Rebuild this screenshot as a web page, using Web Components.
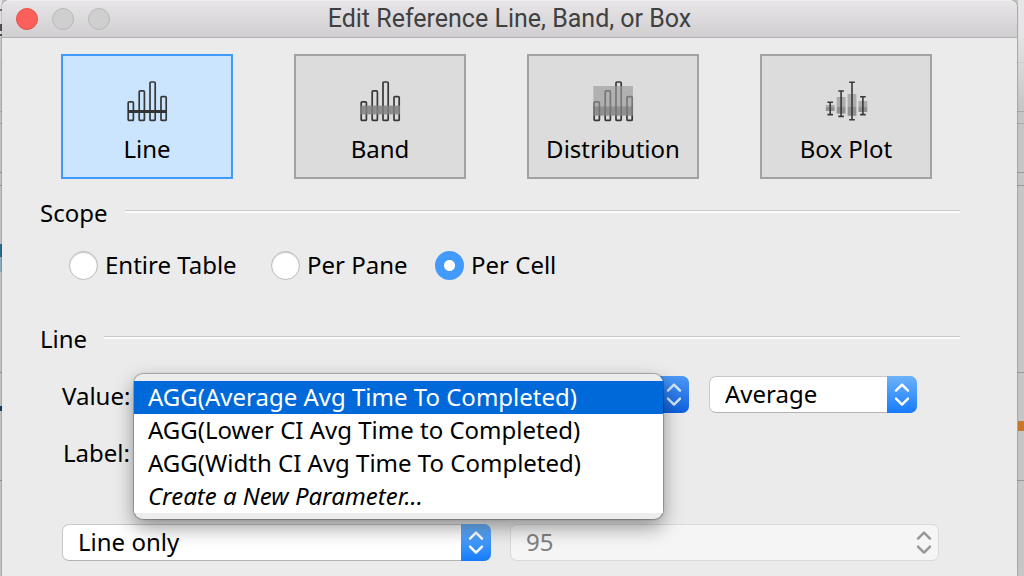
<!DOCTYPE html>
<html lang="en">
<head>
<meta charset="utf-8">
<title>Edit Reference Line, Band, or Box</title>
<style>
  html { background: #c6c6c6; }
  body {
    margin: 0;
    padding: 0 7px 0 2px;
    box-sizing: border-box;
    min-height: 100vh;
    display: flex;
    font: 24px/32px "Noto Sans", "Open Sans", sans-serif;
    color: #000;
    /* slivers of the worksheet behind the dialog */
    background:
      linear-gradient(#0000 244px, #2d6f92 244px 257px, #8fb0bf 257px 272px, #0000 272px) 0 0 / 2px 100% no-repeat,
      linear-gradient(#0000 406px, #1d3f66 406px 411px, #0000 411px) 0 0 / 2px 100% no-repeat,
      linear-gradient(#e4e4e4 0 9px, #777 9px 11px, #e4e4e4 11px 24px, #555 24px 31px, #e4e4e4 31px 34px, #555 34px 36px, #ccc 36px, #0000 100px) 0 0 / 2px 100% no-repeat,
      linear-gradient(#0000 421px, #c87828 421px 431px, #0000 431px) 100% 0 / 6px 100% no-repeat,
      linear-gradient(#e6e6e6 0 30px, #0000 110px) 100% 0 / 6px 100% no-repeat,
      linear-gradient(#0000 62px, #aaa 62px 63px, #0000 63px 111px, #aaa 111px 112px, #0000 112px 123px, #aaa 123px 124px, #0000 124px 172px, #999 172px 173px, #0000 173px 185px, #999 185px 186px, #0000 186px 372px, #999 372px 373px, #0000 373px 480px, #999 480px 481px, #0000 481px),
      #c6c6c6;
  }
  ref-dialog { flex: 1; min-width: 0; }
</style>
</head>
<body>
<ref-dialog heading="Edit Reference Line, Band, or Box">
  <type-picker></type-picker>
  <field-group heading="Scope"><scope-radios></scope-radios></field-group>
  <field-group heading="Line"><line-settings></line-settings></field-group>
</ref-dialog>

<script>
const define = (name, render) => customElements.define(name, class extends HTMLElement {
  connectedCallback() {
    if (this.shadowRoot) return;
    this.attachShadow({ mode: "open" }).innerHTML = render(this);
  }
});

define("ref-dialog", el => `
  <style>
    :host { display: flex; flex-direction: column; background: #ebebeb; border-radius: 8px 8px 0 0; box-shadow: 0 0 2px #0008; }
    header { display: grid; grid-template-columns: 120px 1fr 120px; align-items: center; height: 37px;
      background: linear-gradient(#e8e6e8, #d0ced0); border-bottom: 1px solid #b1b1b1; border-radius: 8px 8px 0 0; box-shadow: inset 0 1px #f0eff0; }
    .lights { display: flex; gap: 14px; padding-left: 14px; }
    .lights button { width: 22px; height: 22px; padding: 0; border: 1px solid #b9b9b9; border-radius: 50%; background: #d0cfd0; }
    .lights .close { background: #fc605b; border-color: #e2504b; }
    h1 { margin: 0; font: 25px/32px Roboto, sans-serif; color: #404040; text-align: center; white-space: nowrap; }
    main { padding: 16px 57px 15px 38px; }
  </style>
  <header>
    <div class="lights">
      <button class="close" aria-label="Close"></button>
      <button aria-label="Minimize" disabled></button>
      <button aria-label="Zoom" disabled></button>
    </div>
    <h1>${el.getAttribute("heading")}</h1>
  </header>
  <main><slot></slot></main>`);

const bars = `<g fill="none" stroke="#383838" stroke-width="1.7">
  <rect x="1.2" y="20.8" width="5.2" height="18.6" rx="1"/><rect x="12.2" y="9.9" width="5.2" height="29.5" rx="1"/>
  <rect x="23" y="1" width="5.2" height="38.4" rx="1"/><rect x="34" y="15.6" width="5.2" height="23.8" rx="1"/></g>`;
const box = (x, top, bottom, boxTop, mid, boxBottom) => `
  <rect x="${x - 4.4}" y="${boxTop}" width="8.8" height="${mid - boxTop}" fill="#acacac"/>
  <rect x="${x - 4.4}" y="${mid}" width="8.8" height="${boxBottom - mid}" fill="#919191"/>
  <path d="M${x - 2.8} ${top}h5.6M${x} ${top}V${bottom}M${x - 2.8} ${bottom}h5.6" stroke="#383838" stroke-width="1.6"/>`;
const icons = {
  line: bars + `<path d="M1 30.6h39" stroke="#333" stroke-width="3"/>`,
  band: bars + `<rect x=".3" y="24.6" width="39.7" height="8.8" fill="#808080" opacity=".85"/>`,
  distribution: bars + `<rect x=".3" y="5" width="39.7" height="29.6" fill="#9a9a9a" opacity=".65"/>
    <rect x=".3" y="25.5" width="39.7" height="9.1" fill="#707070" opacity=".5"/>`,
  box: box(4.2, 21.2, 33.6, 24, 26, 30) + box(15.1, 10, 35.4, 16, 25.5, 32.6)
    + box(26, 1.2, 38.8, 13, 25.5, 34.8) + box(36.9, 15.7, 33.6, 20, 25.5, 31)
};

define("type-card", el => `
  <style>
    :host { display: block; min-width: 0; }
    button { width: 100%; height: 125px; box-sizing: border-box; margin: 0; padding: 12px 0 0; font: inherit; color: inherit;
      display: flex; flex-direction: column; align-items: center; justify-content: center; gap: 11px;
      background: #dcdcdc; border: 2px solid #a2a2a2; }
    button[aria-pressed="true"] { background: #cce5ff; border-color: #3e9bfb; }
    svg { display: block; width: 41px; height: 41px; overflow: visible; }
  </style>
  <button aria-pressed="${el.hasAttribute("selected")}">
    <svg viewBox="0 0 41 41" aria-hidden="true">${icons[el.getAttribute("icon")]}</svg><span><slot></slot></span>
  </button>`);

define("type-picker", () => `
  <style>
    :host { display: grid; grid-template-columns: repeat(4, minmax(0, 1fr)); gap: 61px; padding: 0 28px 0 21px; }
  </style>
  <type-card icon="line" selected>Line</type-card>
  <type-card icon="band">Band</type-card>
  <type-card icon="distribution">Distribution</type-card>
  <type-card icon="box">Box Plot</type-card>`);

define("field-group", el => `
  <style>
    :host { display: block; padding-top: 18px; }
    .head { display: flex; gap: 17px; }
    h2 { margin: 0; font: inherit; }
    .rule { flex: 1; height: 1px; margin-top: 13px; background: #c9c9c9; border-bottom: 2px solid #fbfbfb; }
  </style>
  <section><div class="head"><h2>${el.getAttribute("heading")}</h2><div class="rule"></div></div><slot></slot></section>`);

define("scope-radios", () => `
  <style>
    :host { display: grid; grid-template-columns: 202px 164px auto; justify-content: start; padding: 20px 0 24px 29px; }
    label { display: flex; align-items: center; gap: 7px; white-space: nowrap; }
    input { appearance: none; flex: none; margin: 0; width: 29px; height: 29px; border-radius: 50%; background: #fff;
      border: 1px solid #bababa; box-shadow: inset 0 1px 1px #0003; }
    input:checked { border: 0; box-shadow: none; background: radial-gradient(circle, #fff 5px, #429bfa 6px); }
  </style>
  <label><input type="radio" name="scope">Entire Table</label>
  <label><input type="radio" name="scope">Per Pane</label>
  <label><input type="radio" name="scope" checked>Per Cell</label>`);

/* frame and arrows for the native select passed in; an open list goes in the "menu" slot */
define("pop-up", () => `
  <style>
    :host { display: grid; min-width: 0; position: relative; }
    ::slotted(select) { grid-area: 1 / 1; appearance: none; box-sizing: border-box; width: 100%; height: 37px; margin: 0; padding: 0 40px 2px 15px;
      font: inherit; color: #000; background: #fff; border: 1px solid #c8c8c8; border-bottom-color: #b4b4b4; border-radius: 7px; }
    ::slotted(select:disabled) { color: #808080; opacity: 1; background: #f5f5f5; border-color: #d9d9d9; }
    svg { grid-area: 1 / 1; position: relative; justify-self: end; width: 30px; height: 37px; border-radius: 0 7px 7px 0; pointer-events: none;
      background: linear-gradient(#6cb2f8, #157cfd); color: #fff; }
    :host([open]) svg { background: linear-gradient(#4c98f7, #0d5fdc); color: #d6e6fb; }
    :host([disabled]) svg { background: none; color: #979797; }
  </style>
  <slot></slot>
  <svg viewBox="0 0 30 37" fill="none" stroke="currentColor" stroke-width="2.4" stroke-linecap="round" stroke-linejoin="round" aria-hidden="true">
    <path d="M9 14.6L15 8.6L21 14.6M9 22.6L15 28.6L21 22.6"/>
  </svg>
  <slot name="menu"></slot>`);

define("option-menu", () => `
  <style>
    /* the open list floats over the rows below it */
    :host { position: absolute; z-index: 2; top: -2px; left: 0; right: 26px; padding: 7px 0 6px; border-radius: 9px;
      background: #ededed; box-shadow: 0 0 1px 1px #0004, 0 8px 20px #0006; }
    ul { margin: 0; padding: 0; list-style: none; background: #fff; }
    li { height: 33px; line-height: 32px; padding-left: 14px; white-space: nowrap; overflow: hidden; }
    li[aria-selected="true"] { background: #0069d9; color: #fff; }
    .new { font-style: italic; }
  </style>
  <ul role="listbox" aria-label="Value">
    <li role="option" aria-selected="true">AGG(Average Avg Time To Completed)</li>
    <li role="option">AGG(Lower CI Avg Time to Completed)</li>
    <li role="option">AGG(Width CI Avg Time To Completed)</li>
    <li role="option" class="new">Create a New Parameter...</li>
  </ul>`);

define("line-settings", () => `
  <style>
    :host { display: block; padding: 21px 21px 0 22px; }
    .fields { display: grid; grid-template-columns: 68px minmax(0, 555fr) minmax(0, 224fr); column-gap: 4px; row-gap: 17px; padding-right: 22px; }
    label { text-align: right; line-height: 40px; white-space: nowrap; }
    .fn { margin-left: 16px; }
    .caption { width: 50%; }
    .style { display: grid; grid-template-columns: 1fr 1fr; gap: 19px; padding-top: 51px; }
  </style>
  <div class="fields">
    <label for="value">Value:</label>
    <pop-up open><select id="value"><option></option></select><option-menu slot="menu"></option-menu></pop-up>
    <pop-up class="fn"><select aria-label="Aggregation"><option>Average</option></select></pop-up>
    <label for="caption">Label:</label>
    <pop-up class="caption"><select id="caption"><option></option></select></pop-up>
  </div>
  <div class="style">
    <pop-up><select aria-label="Line style"><option>Line only</option></select></pop-up>
    <pop-up disabled><select aria-label="Confidence" disabled><option>95</option></select></pop-up>
  </div>`);
</script>
</body>
</html>
